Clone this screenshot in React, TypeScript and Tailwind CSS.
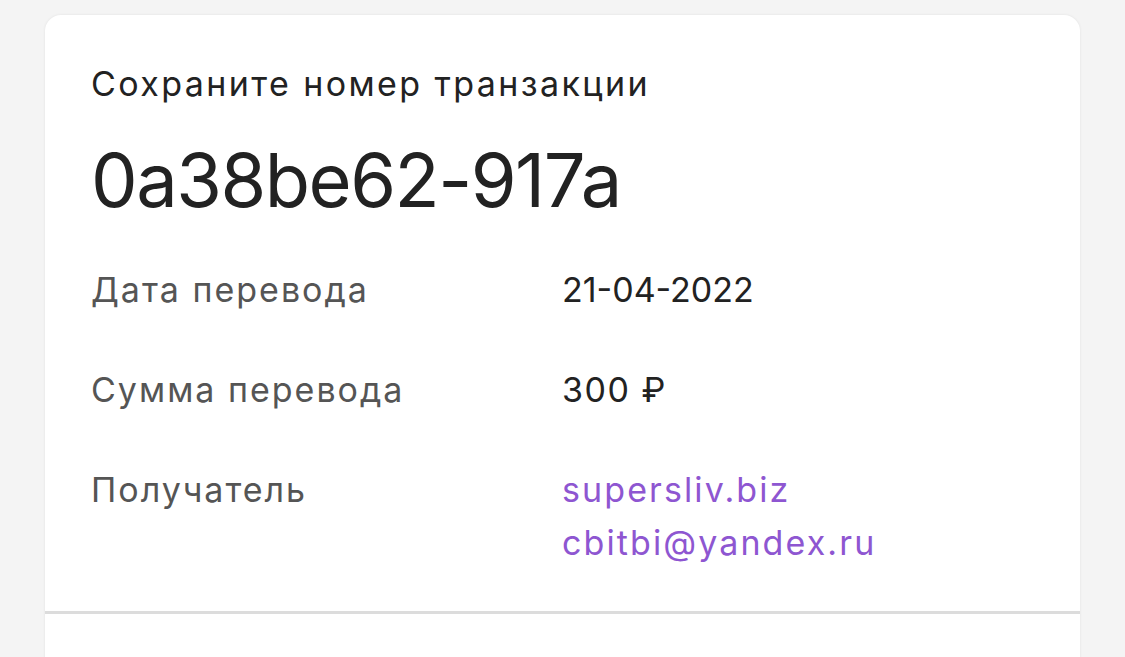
import React from "react";

export default function App() {
  const font = { fontFamily: "Inter, 'Noto Sans', sans-serif" };
  return (
    <div className="min-h-[657px] w-full bg-[#f4f4f4] overflow-hidden" style={font}>
      <div className="ml-[45px] mt-[15px] w-[1035px] bg-white rounded-t-[16px] shadow-[0_0_3px_rgba(0,0,0,0.08)]">
        <div className="pl-[46px] pt-[44px] pb-[42px]">
          <div className="text-[34px] leading-[50px] tracking-[2.4px] text-[#222222]">Сохраните номер транзакции</div>
          <div className="mt-[31px] text-[74px] leading-[80px] tracking-[-1.5px] text-[#222222]">0a38be62-917a</div>
          <div className="mt-[43px] flex flex-col gap-[47px] text-[34px] leading-[53px]">
            <div className="flex">
              <div className="w-[471px] tracking-[2px] text-[#555555]">Дата перевода</div>
              <div className="text-[#222222]">21-04-2022</div>
            </div>
            <div className="flex">
              <div className="w-[471px] tracking-[2px] text-[#555555]">Сумма перевода</div>
              <div className="tracking-[1.5px] text-[#222222]">300 ₽</div>
            </div>
            <div className="flex">
              <div className="w-[471px] tracking-[2px] text-[#555555]">Получатель</div>
              <div className="flex flex-col tracking-[2.1px] text-[#8e56d1]">
                <span>supersliv.biz</span>
                <span>cbitbi@yandex.ru</span>
              </div>
            </div>
          </div>
        </div>
        <div className="h-[3px] bg-[#dcdcdc]" />
        <div className="h-[60px]" />
      </div>
    </div>
  );
}
